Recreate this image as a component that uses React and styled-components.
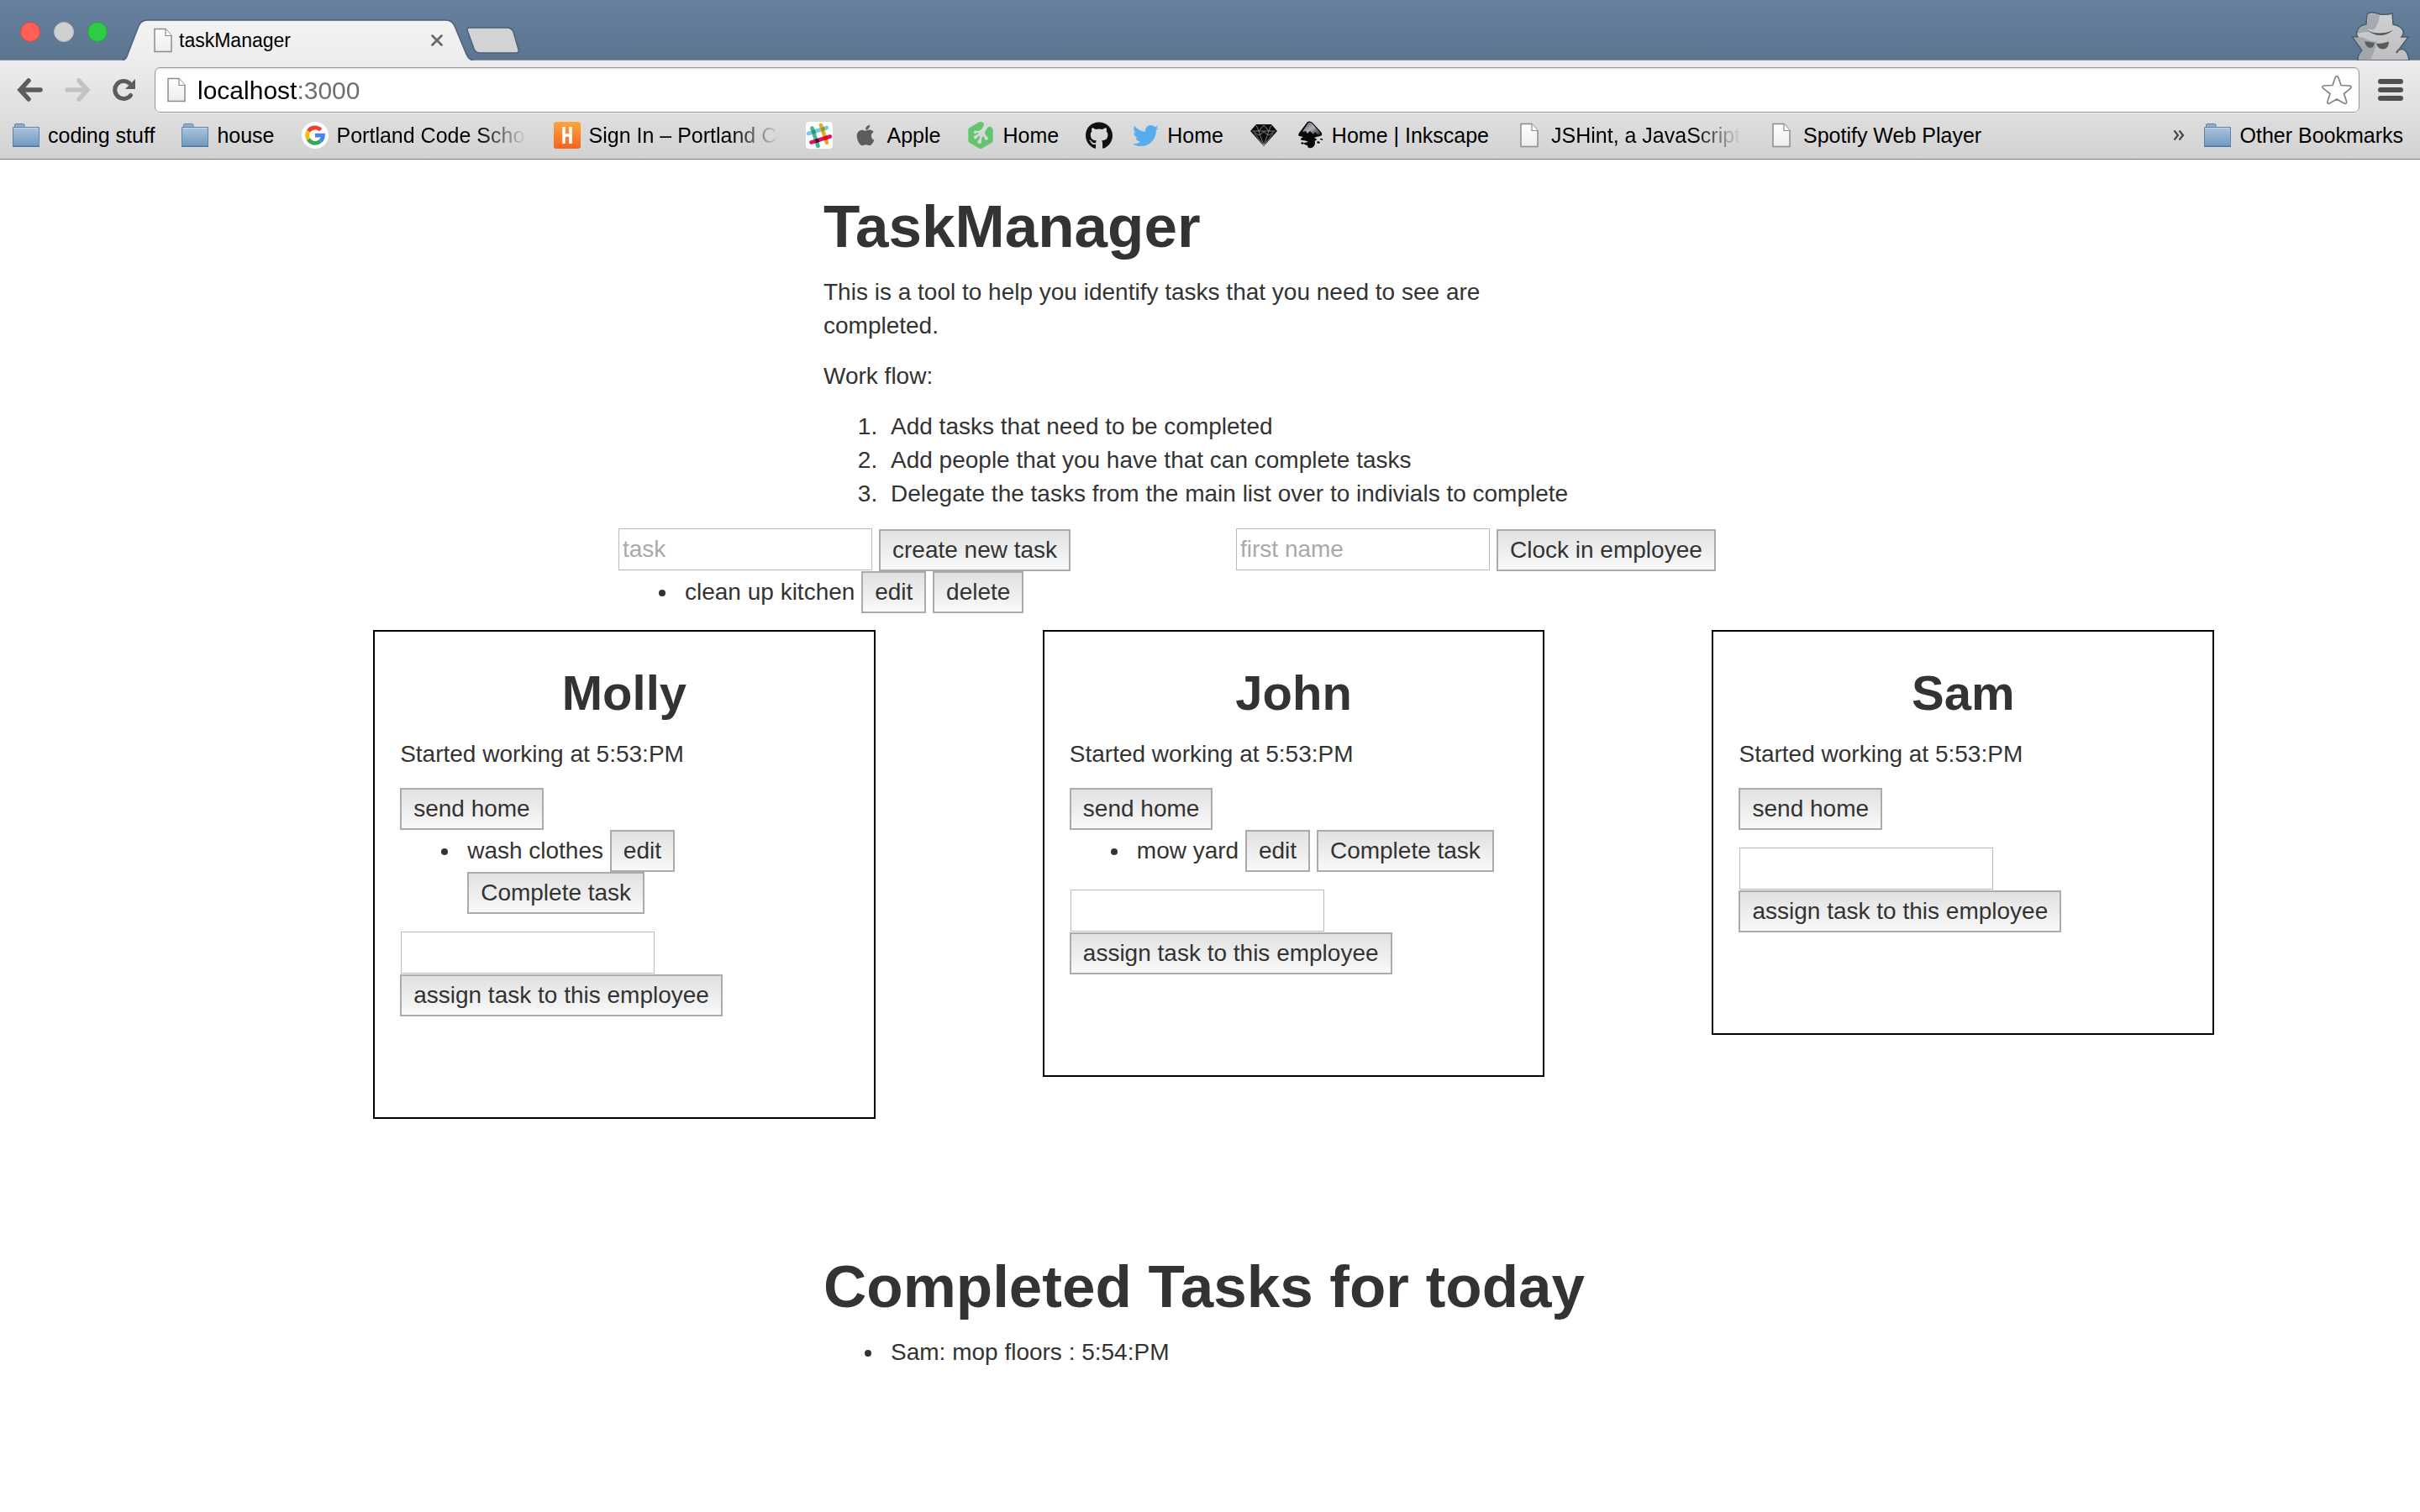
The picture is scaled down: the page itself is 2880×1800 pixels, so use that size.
import React from "react";
import styled, { createGlobalStyle, css } from "styled-components";
import { FaApple, FaGithub, FaTwitter } from "react-icons/fa";
import { SiInkscape, SiTreehouse } from "react-icons/si";

const GlobalStyle = createGlobalStyle`
  * { box-sizing: border-box; }
  body {
    margin: 0;
    background: #fff;
    color: #333;
    font-family: "Liberation Sans", Arial, sans-serif;
    font-size: 28px;
    line-height: 40px;
  }
  button, input { font: inherit; color: inherit; }
`;

/* ---------- browser frame ---------- */

const TabStrip = styled.div`
  display: flex;
  align-items: flex-end;
  height: 72px;
  padding-left: 24px;
  background: linear-gradient(#67809f, #5b7590);
  box-shadow: inset 0 -1px #8b8b8b;
`;

const WindowControls = styled.div`
  display: flex;
  gap: 16px;
  padding-bottom: 22px;
`;

const Light = styled.button`
  width: 24px;
  height: 24px;
  padding: 0;
  border: 1px solid ${(p) => p.$edge};
  border-radius: 50%;
  background: ${(p) => p.$fill};
`;

const Tab = styled.div`
  position: relative;
  display: flex;
  align-items: center;
  width: 418px;
  height: 49px;
  margin-left: 18px;
  padding: 0 36px 0 37px;
  color: #000;
  font-size: 23px;
  line-height: 32px;
`;

const TabShape = styled.svg`
  position: absolute;
  left: 0;
  top: 0;
`;

const TabTitle = styled.span`
  position: relative;
  flex: 1;
  padding-left: 8px;
`;

const PlainButton = styled.button`
  position: relative;
  display: flex;
  padding: 0;
  border: 0;
  background: none;
`;

const NewTab = styled(PlainButton)`
  margin: 0 auto 8px -9px;
`;

const Guest = styled.svg`
  margin-right: 8px;
`;

const Paper = styled.svg`
  position: relative;
`;

const Toolbars = styled.div`
  padding-top: 8px;
  height: 118px;
  background: linear-gradient(#ededed, #d2d2d2);
  border-bottom: 1px solid #7b7b7b;
`;

const NavBar = styled.div`
  display: flex;
  align-items: center;
  padding: 0 20px;
`;

const NavButtons = styled.div`
  display: flex;
  gap: 26px;
  margin-right: 22px;
`;

const AddressBox = styled.div`
  flex: 1;
  display: flex;
  align-items: center;
  height: 54px;
  margin-right: 22px;
  padding: 0 8px 0 14px;
  background: #fff;
  border: 1px solid #999;
  border-radius: 6px;
  box-shadow: inset 0 1px 2px #ddd, 0 1px #f2f2f2;
`;

const Address = styled.input`
  flex: 1;
  min-width: 0;
  height: 46px;
  padding: 2px 0 0;
  margin-left: 14px;
  border: 0;
  outline: 0;
  font-size: 30px;
  background: linear-gradient(90deg, #000 118px, #6e6e6e 118px);
  background-clip: text;
  -webkit-background-clip: text;
  color: transparent;
`;

const BookmarkBar = styled.nav`
  display: flex;
  align-items: center;
  gap: 23px;
  height: 54px;
  padding: 0 20px 0 15px;
  color: #000;
  font-size: 25px;
  line-height: 32px;
`;

const Bookmark = styled.a`
  display: flex;
  align-items: center;
  gap: 10px;
  color: inherit;
  text-decoration: none;
  white-space: nowrap;
`;

const BookmarkIcon = styled.span`
  display: flex;
  align-items: center;
  justify-content: center;
  width: 32px;
  height: 32px;
  color: ${(p) => p.$color || "inherit"};
`;

const BookmarkLabel = styled.span`
  margin-right: 9px;
  ${(p) =>
    p.$fade &&
    css`
      width: 226px;
      mask-image: linear-gradient(90deg, #000 75%, transparent);
    `}
`;

const BookmarkEnd = styled.div`
  display: flex;
  align-items: center;
  gap: 23px;
  margin-left: auto;
  ${BookmarkLabel} { margin-right: 0; }
`;

/* ---------- page ---------- */

const Page = styled.main`
  padding: 40px 30px 60px;
`;

const Narrow = styled.section`
  max-width: 920px;
  margin: 0 auto;
`;

const Title = styled.h1`
  margin: 0 0 18px;
  font-size: 71px;
  line-height: 80px;
  font-weight: 700;
`;

const Text = styled.p`
  margin: 0 0 20px;
`;

const List = styled.ul`
  margin: 0 0 20px;
  padding-left: 72px;
  li { padding-left: 8px; }
`;

const Entry = styled.section`
  display: grid;
  grid-template-columns: 1fr 1fr;
  max-width: 1470px;
  margin: 0 auto;
`;

const EntryColumn = styled.div`
  padding-left: 30px;
`;

const Form = styled.form`
  display: flex;
  align-items: flex-end;
  gap: 7px;
  ${(p) =>
    p.$stacked &&
    css`
      flex-direction: column;
      align-items: flex-start;
      gap: 0;
      margin-top: 20px;
    `}
`;

const Field = styled.input`
  width: 302px;
  height: 50px;
  margin: 1px;
  padding: 0 4px;
  border: 1px solid #bbb;
  background: #fff;
  &::placeholder { color: #a9a9a9; opacity: 1; }
`;

const Button = styled.button`
  padding: 3px 14px;
  border: 2px solid #ababab;
  border-radius: 0;
  background: linear-gradient(#e1e1e1, #f9f9f9);
  line-height: 40px;
`;

const Team = styled.section`
  display: grid;
  grid-template-columns: repeat(3, 1fr);
  align-items: start;
  max-width: 2390px;
  margin: 0 auto 160px;
`;

const Card = styled.article`
  margin-left: 25%;
  padding: 40px 30px 120px;
  border: 2px solid #000;
  ${List} { margin: 0; }
`;

const Name = styled.h2`
  margin: 0 0 20px;
  font-size: 58px;
  line-height: 66px;
  font-weight: 700;
  text-align: center;
`;

/* ---------- drawings ---------- */

const PageIcon = () => (
  <Paper width="22" height="30" viewBox="0 0 22 30">
    <defs>
      <linearGradient id="paper" x2="0" y2="1">
        <stop stopColor="#fff" />
        <stop offset="1" stopColor="#ececec" />
      </linearGradient>
    </defs>
    <path d="M1 1.5h13l7 8v19H1z" fill="url(#paper)" stroke="#8c8c8c" strokeWidth="1.5" />
    <path d="M14 1.5v8h7" fill="#fff" stroke="#8c8c8c" strokeWidth="1.2" />
  </Paper>
);

const FolderIcon = () => (
  <svg width="32" height="30" viewBox="0 0 32 30">
    <defs>
      <linearGradient id="folder" x2="0" y2="1">
        <stop stopColor="#a9c5de" />
        <stop offset="1" stopColor="#7199bf" />
      </linearGradient>
    </defs>
    <path d="M2.5 6V3q0-1.500 1.500-1.500h8.500q1.500 0 1.500 1.500v3" fill="#8fb0cf" stroke="#5f82a5" />
    <path d="M.5 5.500h31v22.500H.5z" fill="url(#folder)" stroke="#5f82a5" />
    <path d="M1.500 6.500h29" stroke="#c3d7ea" />
    <path d="M0 28.500h32" stroke="#50708f" />
  </svg>
);

const GoogleIcon = () => (
  <svg width="32" height="32" viewBox="0 0 32 32">
    <circle cx="16" cy="16" r="16" fill="#fff" />
    <g fill="none" strokeWidth="4.800">
      <path d="M22.600 9.800A9.400 9.400 0 0 0 8 11.200" stroke="#ea4335" />
      <path d="M8 11.200A9.400 9.400 0 0 0 8 20.800" stroke="#fbbc05" />
      <path d="M8 20.800A9.400 9.400 0 0 0 22.300 23" stroke="#34a853" />
      <path d="M22.300 23A9.400 9.400 0 0 0 25.400 16.200H16" stroke="#4285f4" />
    </g>
  </svg>
);

const HIcon = () => (
  <svg width="32" height="32" viewBox="0 0 32 32">
    <defs>
      <linearGradient id="orange" x2="0" y2="1">
        <stop stopColor="#fba63c" />
        <stop offset="1" stopColor="#f8631d" />
      </linearGradient>
    </defs>
    <rect width="32" height="32" rx="3" fill="url(#orange)" />
    <path d="M12 6v20M20 6v20M12 16h8" stroke="#fff" strokeWidth="3.600" />
  </svg>
);

const SlackIcon = () => (
  <svg width="32" height="32" viewBox="0 0 32 32">
    <rect width="32" height="32" rx="4" fill="#fff" />
    <g fill="none" strokeWidth="4.600" strokeLinecap="round">
      <path d="M3 14L25 7" stroke="#72cbe2" />
      <path d="M18 4l7 21" stroke="#ecaa22" />
      <path d="M7.500 7.500L14.500 29" stroke="#3eb890" />
      <path d="M6.500 24.500L29 17.500" stroke="#e0115f" />
    </g>
    <path d="M17.700 7.200l4-1.300 1.500 4.200-4 1.300z" fill="#8c9a2c" />
    <path d="M6.800 10.600l4-1.300 1.400 4.200-4 1.300z" fill="#2a8f8a" />
    <path d="M10.700 21l4-1.300 1.500 4.300-4 1.300z" fill="#3a1135" />
    <path d="M21 17.800l4-1.300 1.500 4.300-4 1.300z" fill="#ce1320" />
  </svg>
);

const DiamondIcon = () => (
  <svg width="32" height="28" viewBox="0 0 32 28">
    <path d="M7 1h18l7 8-16 18L0 9z" fill="#0c0c0c" />
    <path
      d="M2 9h28M7 2l3 7 6-7 6 7 3-7M4 10l6 4 6-4 6 4 6-4M10 9l6 17 6-17M5 12l11 14 11-14"
      fill="none"
      stroke="#a9a9a9"
      strokeWidth=".7"
    />
  </svg>
);

const InkscapeIcon = () => (
  <svg width="32" height="34" viewBox="0 0 32 34">
    <defs>
      <linearGradient id="ink" x2="1" y2="1">
        <stop stopColor="#50535a" />
        <stop offset=".5" stopColor="#b2b4bd" />
        <stop offset="1" stopColor="#22242a" />
      </linearGradient>
    </defs>
    <path
      d="M13 1q3-1.500 6 1l10 11q3 4-1 5-5 1-7 2 5 2 2 3-2 1-1 3 0 4-4 6-5 1-5-3-5-1-4-3l5-1q-3-2-7-2-5-1 1-4l-5-1q-2-2 1-5z"
      fill="#080808"
    />
    <path d="M14 2q2-1 4.500 1l9.500 11q1 2-3 2.500l-3-3.500-2 3-4-4-3 3-2-3-4 1z" fill="url(#ink)" />
    <path d="M25 24l3 1-1 2-3-1zM28 21l3 0v2l-3-1zM6 25l3 1-1 2-3-1z" fill="#080808" />
  </svg>
);

const Arrow = ({ color, flip }) => (
  <svg width="31" height="28" viewBox="0 0 31 28">
    <path
      d="M14 3L4 14l10 11M5 14h23"
      transform={flip ? "matrix(-1 0 0 1 31 0)" : undefined}
      fill="none"
      stroke={color}
      strokeWidth="5.500"
      strokeLinecap="round"
    />
  </svg>
);

const ReloadIcon = () => (
  <svg width="28" height="28" viewBox="0 0 28 28">
    <path
      d="M21.500 20.500A10.500 10.500 0 1 1 20 6"
      fill="none"
      stroke="#5c5c5c"
      strokeWidth="5"
      strokeLinecap="round"
    />
    <path d="M27 1v12H15z" fill="#5c5c5c" />
  </svg>
);

const StarIcon = () => (
  <svg width="36" height="36" viewBox="0 0 36 36">
    <path
      d="M16 3.500q2-4 4 0l3 9 10.500.500q3 .5.500 3.500l-7.500 6 3 9q.5 4-3 2.500L18 29l-8.500 5q-3.500 1-2.500-2.500l3-9-8-6q-2.500-3 .5-3.500l10.500-.5z"
      fill="#fff"
      stroke="#838383"
      strokeWidth="1.700"
    />
  </svg>
);

const MenuIcon = () => (
  <svg width="30" height="28" viewBox="0 0 30 28">
    <path d="M3 4h24M3 14h24M3 24h24" stroke="#505050" strokeWidth="6" strokeLinecap="round" />
  </svg>
);

const GuestIcon = () => (
  <Guest width="74" height="58" viewBox="0 0 74 58" aria-label="Incognito">
    <defs>
      <linearGradient id="guest" x2="0" y2="1">
        <stop stopColor="#cfd1d3" />
        <stop offset="1" stopColor="#bcbec0" />
      </linearGradient>
    </defs>
    <path
      d="M8 58q0-7 5-12L1.500 30H8q-2-2-1-6 2-8 11-9l1-12q4-4 15 0 8 1 15-1l1 13q10 2 12 8 1 4-2 7h8L54 49q4-6 9-4 5 4 6 13z"
      fill="url(#guest)"
      stroke="#4a5a6c"
      strokeWidth="1.500"
    />
    <path d="M20 3.500q8-2 14 1-1 10-7 17l-7-1 2 3-14 2q-1-8 11-10zM3 30.500h11q8 5 17 5-3 12-8 22H9q0-7 5-12z" fill="#9a9da1" opacity=".75" />
    <path d="M19 22q14 7 31 0-15 12-31 0z" fill="#555" />
    <path d="M16 35q6 1 12 2-1 6-5.500 6Q18 43 16 35zM30 38q7 0 15-2.500 0 9-7.500 9Q32 44.500 30 38z" fill="#5b5b5b" />
    <path d="M54 49q3-6 7-6" stroke="#666" strokeWidth="2" fill="none" />
  </Guest>
);

const TabOutline = () => (
  <TabShape width="418" height="50" viewBox="0 0 418 50">
    <defs>
      <linearGradient id="tab" x2="0" y2="1">
        <stop stopColor="#f3f3f3" />
        <stop offset="1" stopColor="#ededed" />
      </linearGradient>
    </defs>
    <path
      d="M0 49q4 0 6-7L19 8Q22 1 29 1H385q7 0 10 7l14 34q3 7 8 7v2H0z"
      fill="url(#tab)"
    />
    <path
      d="M0 48.500q4 0 6-7L19 8Q22 1 29 1H385q7 0 10 7l14 33.500q3 7 8 7"
      fill="none"
      stroke="#4b627c"
      strokeWidth="1.500"
    />
  </TabShape>
);

const NewTabIcon = () => (
  <svg width="64" height="32" viewBox="0 0 64 32">
    <path
      d="M4 1h44q6 0 8 5l6 21q1 4-3 4H17q-6 0-8-5L1.500 5Q0 1 4 1z"
      fill="#d3d3d3"
      stroke="#4b627c"
      strokeWidth="1.500"
    />
  </svg>
);

const CloseIcon = () => (
  <svg width="16" height="16" viewBox="0 0 16 16">
    <path d="M2.500 2.500l11 11M13.500 2.500l-11 11" stroke="#6b6b6b" strokeWidth="2.800" strokeLinecap="round" />
  </svg>
);

const ChevronIcon = () => (
  <svg width="14" height="14" viewBox="0 0 14 14">
    <path d="M1.500 1.500L6 7l-4.500 5.500M7.500 1.500L12 7l-4.500 5.500" fill="none" stroke="#484848" strokeWidth="2.200" />
  </svg>
);

/* ---------- data ---------- */

const bookmarks = [
  { label: "coding stuff", icon: <FolderIcon /> },
  { label: "house", icon: <FolderIcon /> },
  { label: "Portland Code Schoo", icon: <GoogleIcon />, fade: true },
  { label: "Sign In – Portland Co", icon: <HIcon />, fade: true },
  { name: "Slack", icon: <SlackIcon /> },
  { label: "Apple", icon: <FaApple size={28} />, color: "#5d5d5d" },
  { label: "Home", icon: <SiTreehouse size={32} />, color: "#62c66f" },
  { name: "GitHub", icon: <FaGithub size={33} />, color: "#111" },
  { label: "Home", icon: <FaTwitter size={31} />, color: "#55acee" },
  { name: "Diamond", icon: <DiamondIcon /> },
  { label: "Home | Inkscape", icon: <InkscapeIcon /> },
  { label: "JSHint, a JavaScript", icon: <PageIcon />, fade: true },
  { label: "Spotify Web Player", icon: <PageIcon /> },
];

const employees = [
  { name: "Molly", tasks: ["wash clothes"] },
  { name: "John", tasks: ["mow yard"] },
  { name: "Sam", tasks: [] },
];

const BookmarkLink = ({ label, name, icon, color, fade }) => (
  <Bookmark href="#" aria-label={name}>
    <BookmarkIcon $color={color}>{icon}</BookmarkIcon>
    {label && <BookmarkLabel $fade={fade}>{label}</BookmarkLabel>}
  </Bookmark>
);

const EmployeeCard = ({ name, tasks }) => (
  <Card>
    <Name>{name}</Name>
    <Text>Started working at 5:53:PM</Text>
    <Button type="button">send home</Button>
    {tasks.length > 0 && (
      <List>
        {tasks.map((task) => (
          <li key={task}>
            {task} <Button type="button">edit</Button> <Button type="button">Complete task</Button>
          </li>
        ))}
      </List>
    )}
    <Form $stacked>
      <Field type="text" aria-label={`Task for ${name}`} />
      <Button type="button">assign task to this employee</Button>
    </Form>
  </Card>
);

export default function App() {
  return (
    <>
      <GlobalStyle />
      <header>
        <TabStrip>
          <WindowControls>
            <Light $fill="#fe5f57" $edge="#e0443e" aria-label="Close window" />
            <Light $fill="#d0d0d0" $edge="#bababa" aria-label="Minimize" />
            <Light $fill="#30cb46" $edge="#1fa831" aria-label="Zoom" />
          </WindowControls>
          <Tab>
            <TabOutline />
            <PageIcon />
            <TabTitle>taskManager</TabTitle>
            <PlainButton aria-label="Close tab"><CloseIcon /></PlainButton>
          </Tab>
          <NewTab aria-label="New tab"><NewTabIcon /></NewTab>
          <GuestIcon />
        </TabStrip>
        <Toolbars>
          <NavBar>
            <NavButtons>
              <PlainButton aria-label="Back"><Arrow color="#5c5c5c" /></PlainButton>
              <PlainButton aria-label="Forward"><Arrow color="#c3c3c3" flip /></PlainButton>
              <PlainButton aria-label="Reload"><ReloadIcon /></PlainButton>
            </NavButtons>
            <AddressBox>
              <PageIcon />
              <Address aria-label="Address" defaultValue="localhost:3000" />
              <PlainButton aria-label="Bookmark this page"><StarIcon /></PlainButton>
            </AddressBox>
            <PlainButton aria-label="Menu"><MenuIcon /></PlainButton>
          </NavBar>
          <BookmarkBar>
            {bookmarks.map((b, i) => (
              <BookmarkLink key={i} {...b} />
            ))}
            <BookmarkEnd>
              <PlainButton aria-label="More bookmarks"><ChevronIcon /></PlainButton>
              <BookmarkLink label="Other Bookmarks" icon={<FolderIcon />} />
            </BookmarkEnd>
          </BookmarkBar>
        </Toolbars>
      </header>
      <Page>
        <Narrow>
          <Title>TaskManager</Title>
          <Text>This is a tool to help you identify tasks that you need to see are completed.</Text>
          <Text>Work flow:</Text>
          <List as="ol">
            <li>Add tasks that need to be completed</li>
            <li>Add people that you have that can complete tasks</li>
            <li>Delegate the tasks from the main list over to indivials to complete</li>
          </List>
        </Narrow>
        <Entry>
          <EntryColumn>
            <Form>
              <Field type="text" placeholder="task" aria-label="task" />
              <Button type="button">create new task</Button>
            </Form>
            <List>
              <li>
                clean up kitchen <Button type="button">edit</Button> <Button type="button">delete</Button>
              </li>
            </List>
          </EntryColumn>
          <EntryColumn>
            <Form>
              <Field type="text" placeholder="first name" aria-label="first name" />
              <Button type="button">Clock in employee</Button>
            </Form>
          </EntryColumn>
        </Entry>
        <Team>
          {employees.map((e) => (
            <EmployeeCard key={e.name} {...e} />
          ))}
        </Team>
        <Narrow>
          <Title>Completed Tasks for today</Title>
          <List>
            <li>Sam: mop floors : 5:54:PM</li>
          </List>
        </Narrow>
      </Page>
    </>
  );
}
